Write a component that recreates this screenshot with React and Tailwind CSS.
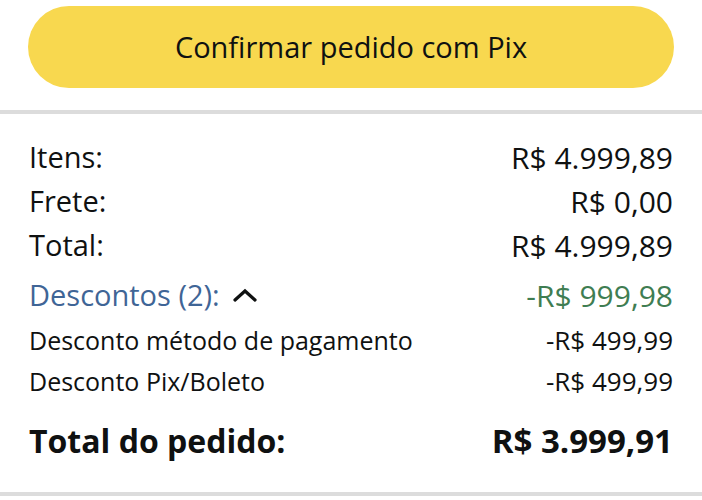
import React from "react";

const rows = [
  { label: "Itens:", value: "R$ 4.999,89" },
  { label: "Frete:", value: "R$ 0,00" },
  { label: "Total:", value: "R$ 4.999,89" },
];

const discounts = [
  { label: "Desconto método de pagamento", value: "-R$ 499,99" },
  { label: "Desconto Pix/Boleto", value: "-R$ 499,99" },
];

function ChevronUp() {
  return (
    <svg width="24" height="14" viewBox="0 0 24 14" className="ml-[13px]">
      <polyline
        points="2,12 12,3 22,12"
        fill="none"
        stroke="#0f1111"
        strokeWidth="3.2"
        strokeLinecap="round"
        strokeLinejoin="miter"
      />
    </svg>
  );
}

export default function App() {
  return (
    <div
      className="w-[702px] h-[500px] bg-white text-[#0f1111] overflow-hidden"
      style={{ fontFamily: '"Open Sans", "Noto Sans", sans-serif' }}
    >
      {/* confirm button */}
      <div className="px-[28px] pt-[6px]">
        <button className="w-full h-[82px] rounded-full bg-[#f8d84f] flex items-center justify-center text-[29px] text-[#0f1111]">
          Confirmar pedido com Pix
        </button>
      </div>

      <div className="mt-[22px] h-[4px] bg-[#dcdcdc]" />

      {/* summary */}
      <div className="px-[29px] pt-[21px]">
        {rows.map((r) => (
          <div
            key={r.label}
            className="flex justify-between items-center h-[44px] text-[29px]"
          >
            <span>{r.label}</span>
            <span className="text-[30px]">{r.value}</span>
          </div>
        ))}

        <div className="mt-[6px] flex justify-between items-center h-[44px] text-[29px]">
          <span className="flex items-center text-[#3f6596]">
            Descontos (2):
            <ChevronUp />
          </span>
          <span className="text-[30px] text-[#3f7d52]">-R$ 999,98</span>
        </div>

        <div className="mt-[3px]">
          {discounts.map((d) => (
            <div
              key={d.label}
              className="flex justify-between items-center h-[41px] text-[25px]"
            >
              <span>{d.label}</span>
              <span className="text-[26px]">{d.value}</span>
            </div>
          ))}
        </div>

        <div className="mt-[15px] flex justify-between items-center h-[48px] text-[32px] font-bold">
          <span>Total do pedido:</span>
          <span className="text-[33px]">R$ 3.999,91</span>
        </div>
      </div>

      <div className="mt-[27px] h-[4px] bg-[#dcdcdc]" />
    </div>
  );
}
